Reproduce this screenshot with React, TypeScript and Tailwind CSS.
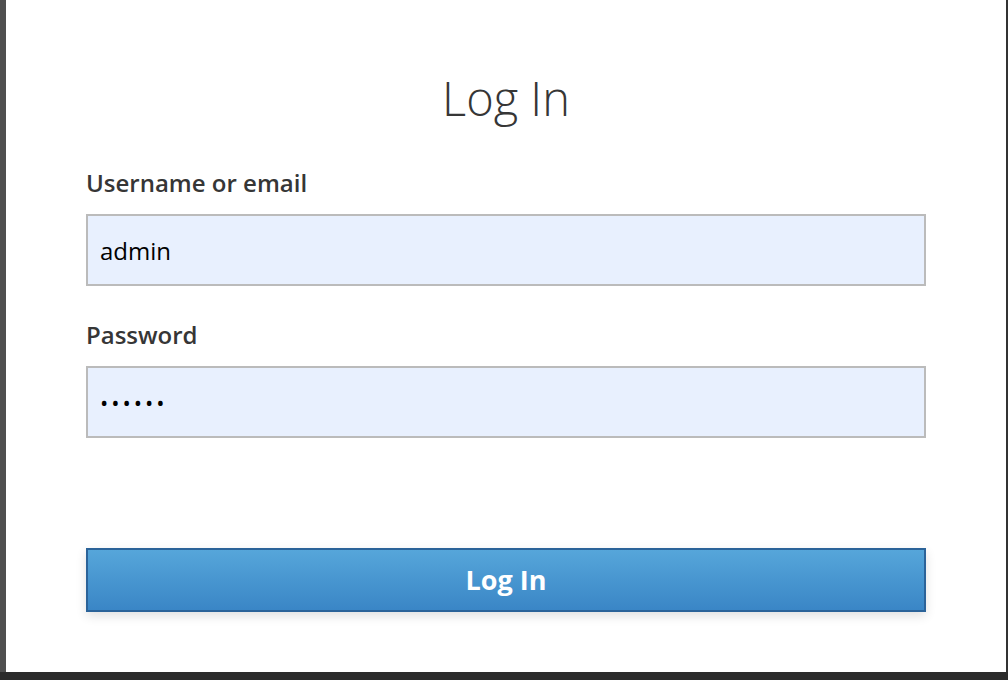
import React from "react";

export default function App() {
    return (
        <div className="w-[1008px] h-[680px] bg-[#2e2e2e] flex flex-col overflow-hidden">
            <div className="flex h-[672px]">
                <div className="w-[6px] bg-[#4f4f4f]"></div>
                <main
                    className="flex-1 bg-white px-[80px] pt-[70px]"
                    style={{ fontFamily: '"Open Sans", sans-serif' }}
                >
                    <h1 className="text-center text-[47px] font-light text-[#363636] leading-[56px]">
                        Log In
                    </h1>

                    <form className="mt-[42px]" onSubmit={(e) => e.preventDefault()}>
                        {/* Username */}
                        <label className="block text-[24px] font-semibold text-[#363636] leading-[30px]">
                            Username or email
                        </label>
                        <input
                            readOnly
                            value="admin"
                            className="mt-[16px] block w-full h-[72px] bg-[#e8f0fe] border-2 border-[#bbbbbb] px-[12px] text-[24px] text-black outline-none"
                        />

                        {/* Password */}
                        <label className="block mt-[34px] text-[24px] font-semibold text-[#363636] leading-[30px]">
                            Password
                        </label>
                        <input
                            readOnly
                            type="password"
                            value="secret"
                            className="mt-[16px] block w-full h-[72px] bg-[#e8f0fe] border-2 border-[#bbbbbb] px-[12px] text-[22px] text-black outline-none tracking-[3px]"
                        />

                        <button
                            type="submit"
                            className="mt-[110px] block w-full h-[64px] border-2 border-[#2b6399] bg-gradient-to-b from-[#56a6da] to-[#3a86c6] text-white text-[27px] font-bold shadow-[0_4px_10px_rgba(0,0,0,0.12)]"
                        >
                            Log In
                        </button>
                    </form>
                </main>
                <div className="w-[2px] bg-[#333333]"></div>
            </div>
            <div className="flex-1 bg-[#2b2b2b]"></div>
        </div>
    );
}
